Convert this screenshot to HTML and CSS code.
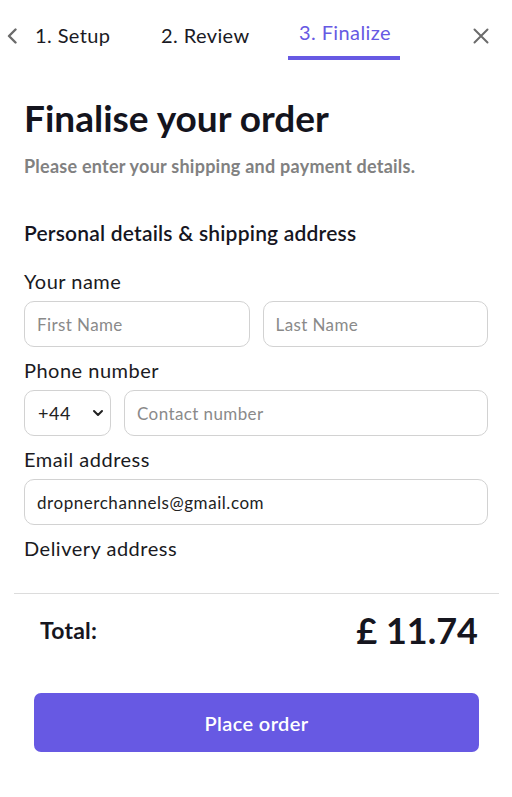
FILE: index.html
```html
<!DOCTYPE html>
<html lang="en">
<head>
<meta charset="utf-8">
<title>Finalise your order</title>
<link rel="stylesheet" href="styles.css">
</head>
<body>
<div class="page">
  <nav class="steps">
    <button class="back" aria-label="Back">
      <svg width="12" height="16" viewBox="0 0 12 16"><path d="M9.5 1.5 L3 8 L9.5 14.5" fill="none" stroke="#6b6b6b" stroke-width="2.4" stroke-linecap="round" stroke-linejoin="round"/></svg>
    </button>
    <div class="tab tab-1">1. Setup</div>
    <div class="tab tab-2">2. Review</div>
    <div class="tab tab-active">3. Finalize</div>
    <button class="close" aria-label="Close">
      <svg width="16" height="16" viewBox="0 0 16 16"><path d="M1.5 1.5 L14.5 14.5 M14.5 1.5 L1.5 14.5" fill="none" stroke="#6b6b6b" stroke-width="2" stroke-linecap="round"/></svg>
    </button>
  </nav>

  <main class="scroll">
    <h1 class="title">Finalise your order</h1>
    <p class="subtitle">Please enter your shipping and payment details.</p>

    <h2 class="section">Personal details &amp; shipping address</h2>

    <div class="field">
      <label class="label">Your name</label>
      <div class="row">
        <input class="input" type="text" placeholder="First Name">
        <input class="input" type="text" placeholder="Last Name">
      </div>
    </div>

    <div class="field">
      <label class="label">Phone number</label>
      <div class="row row-phone">
        <div class="select">
          <span>+44</span>
          <svg width="12" height="8" viewBox="0 0 12 8"><path d="M2 2 L6 6 L10 2" fill="none" stroke="#222" stroke-width="2" stroke-linecap="round" stroke-linejoin="round"/></svg>
        </div>
        <input class="input" type="text" placeholder="Contact number">
      </div>
    </div>

    <div class="field">
      <label class="label">Email address</label>
      <input class="input input-full" type="text" value="dropnerchannels@gmail.com">
    </div>

    <div class="field">
      <label class="label">Delivery address</label>
    </div>
  </main>

  <footer class="footer">
    <div class="divider"></div>
    <div class="total">
      <span class="total-label">Total:</span>
      <span class="total-value">£ 11.74</span>
    </div>
    <button class="place">Place order</button>
  </footer>
</div>
</body>
</html>
```

FILE: styles.css
```css
* { box-sizing: border-box; }

html, body {
  margin: 0;
  padding: 0;
  background: #ffffff;
}

body {
  font-family: "Lato", "Noto Sans", sans-serif;
  color: #16161f;
}

.page {
  width: 512px;
  height: 797px;
  display: flex;
  flex-direction: column;
}

/* ---------- steps nav ---------- */
.steps {
  height: 60px;
  display: flex;
  align-items: flex-start;
  padding: 0 23px 0 6px;
}

.back, .close {
  border: 0;
  background: none;
  padding: 0;
  display: flex;
  cursor: pointer;
}

.back { margin-top: 28px; }
.close { margin-top: 28px; margin-left: auto; }

.tab {
  font-size: 20px;
  line-height: 24px;
  letter-spacing: 0.4px;
  color: #1a1a24;
  padding-top: 23px;
  white-space: nowrap;
}

.tab-1 { margin-left: 17px; width: 126px; }
.tab-2 { width: 127px; }

.tab-active {
  color: #6759e3;
  padding: 20px 0 12px 11px;
  width: 112px;
  border-bottom: 4px solid #6759e3;
}

/* ---------- scroll content ---------- */
.scroll {
  height: 501px;
  overflow: hidden;
  padding: 36px 24px 0;
}

.title {
  margin: 0;
  font-size: 37px;
  line-height: 44px;
  font-weight: 700;
  color: #14141d;
}

.subtitle {
  margin: 14px 0 0;
  font-size: 18px;
  line-height: 24px;
  font-weight: 700;
  letter-spacing: 0.25px;
  color: #818181;
}

.section {
  margin: 42px 0 0;
  font-size: 21px;
  line-height: 26px;
  font-weight: 600;
  letter-spacing: 0.2px;
  color: #16161f;
}

.field { margin-top: 11px; }
.section + .field { margin-top: 23px; }

.label {
  display: block;
  font-size: 20px;
  line-height: 24px;
  letter-spacing: 0.5px;
  margin-bottom: 8px;
  color: #1a1a22;
}

.row {
  display: grid;
  grid-template-columns: 1fr 1fr;
  gap: 13px;
}

.row-phone { grid-template-columns: 87px 1fr; }

.input, .select {
  height: 46px;
  border: 1px solid #d2d2d2;
  border-radius: 10px;
  font-family: inherit;
  font-size: 17px;
  letter-spacing: 0.4px;
  color: #222;
  padding: 0 12px;
  width: 100%;
  background: #fff;
  outline: none;
}

.input::placeholder { color: #8a8a8a; }

.select {
  display: flex;
  align-items: center;
  justify-content: space-between;
  padding: 0 6px 0 13px;
  font-size: 18px;
  letter-spacing: 0.6px;
}

.input-full { display: block; letter-spacing: 0.55px; }

/* ---------- footer ---------- */
.footer {
  padding-top: 32px;
}

.divider {
  height: 1px;
  background: #dcdcdc;
  margin: 0 13px 0 14px;
}

.total {
  display: flex;
  justify-content: space-between;
  align-items: flex-start;
  padding: 20px 34px 0 40px;
}

.total-label {
  font-size: 23px;
  line-height: 28px;
  font-weight: 700;
  letter-spacing: 0.2px;
  margin-top: 2px;
}

.total-value {
  font-size: 36px;
  line-height: 40px;
  font-weight: 700;
  margin-top: -4px;
}

.place {
  display: block;
  margin: 43px 33px 0 34px;
  width: calc(100% - 67px);
  height: 59px;
  border: 0;
  border-radius: 7px;
  background: #6759e3;
  color: #fff;
  font-family: inherit;
  font-size: 20px;
  font-weight: 600;
  letter-spacing: 0.4px;
  cursor: pointer;
}
```
